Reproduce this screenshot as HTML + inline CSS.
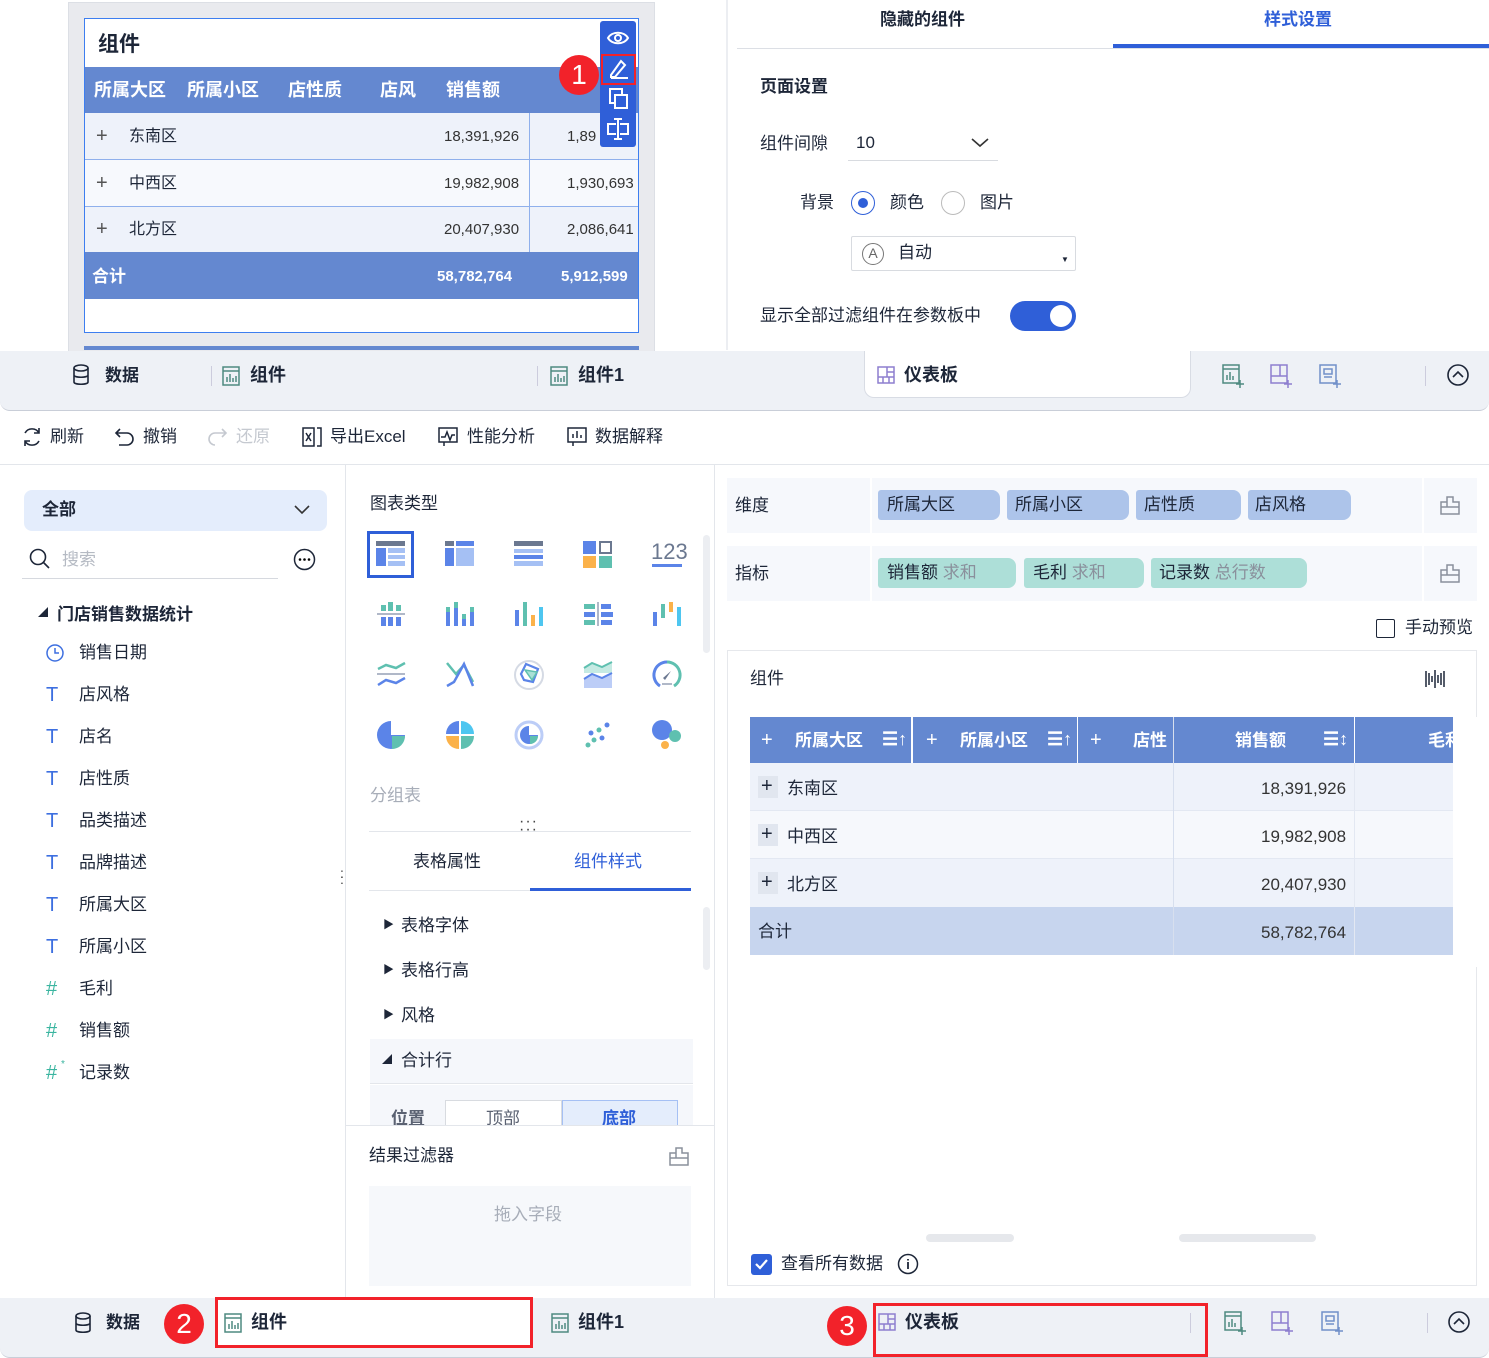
<!DOCTYPE html>
<html><head><meta charset="utf-8"><style>
*{box-sizing:border-box;margin:0;padding:0}
body{width:1489px;height:1358px;position:relative;overflow:hidden;background:#fff;font-family:"Liberation Sans","Noto Sans CJK SC",sans-serif;color:#1d2638;font-size:17px}
.a{position:absolute}
.t{position:absolute;white-space:nowrap;line-height:1}
.b{font-weight:bold}
.w{color:#fff}
svg{position:absolute;overflow:visible}
.tab{position:absolute;height:60px;background:#eef1f6;left:0;width:1489px;border-radius:0 0 10px 10px;border-bottom:1px solid #c9ced8}
.red{position:absolute;border:3px solid #f2222a}
.rc{position:absolute;width:40px;height:40px;border-radius:50%;background:#f2222a;color:#fff;font-size:28px;text-align:center;line-height:40px}
.gi{stroke:#4e8a80;fill:none;stroke-width:1.5}
</style></head><body>

<!-- ====== top left preview ====== -->
<div class="a" style="left:68px;top:2px;width:587px;height:350px;background:#e9eaee;border:1px solid #dcdfe5"></div>
<div class="a" style="left:84px;top:18px;width:555px;height:315px;background:#fff;border:1px solid #3d7ef0"></div>
<div class="t b" style="left:98px;top:34px;font-size:21px">组件</div>
<div class="a" style="left:85px;top:67px;width:553px;height:46px;background:#6488d0"></div>
<div class="t b w" style="left:94px;top:81px;font-size:18px">所属大区</div>
<div class="t b w" style="left:187px;top:81px;font-size:18px">所属小区</div>
<div class="t b w" style="left:288px;top:81px;font-size:18px">店性质</div>
<div class="t b w" style="left:380px;top:81px;font-size:18px">店风</div>
<div class="t b w" style="left:446px;top:81px;font-size:18px">销售额</div>
<div class="a" style="left:85px;top:113px;width:553px;height:47px;background:#eef2fa;border-bottom:1px solid #8fb0ec"></div>
<div class="a" style="left:85px;top:160px;width:553px;height:47px;background:#f7f9fd;border-bottom:1px solid #8fb0ec"></div>
<div class="a" style="left:85px;top:207px;width:553px;height:45px;background:#eef2fa"></div>
<div class="a" style="left:529px;top:113px;width:1px;height:139px;background:#8fb0ec"></div>
<div class="t" style="left:96px;top:126px;font-size:20px;color:#555">+</div>
<div class="t" style="left:129px;top:129px;font-size:16px">东南区</div>
<div class="t" style="left:444px;top:129px;font-size:15px;color:#333">18,391,926</div>
<div class="t" style="left:567px;top:129px;font-size:15px;color:#333">1,89</div>
<div class="t" style="left:96px;top:173px;font-size:20px;color:#555">+</div>
<div class="t" style="left:129px;top:176px;font-size:16px">中西区</div>
<div class="t" style="left:444px;top:176px;font-size:15px;color:#333">19,982,908</div>
<div class="t" style="left:567px;top:176px;font-size:15px;color:#333">1,930,693</div>
<div class="t" style="left:96px;top:219px;font-size:20px;color:#555">+</div>
<div class="t" style="left:129px;top:222px;font-size:16px">北方区</div>
<div class="t" style="left:444px;top:222px;font-size:15px;color:#333">20,407,930</div>
<div class="t" style="left:567px;top:222px;font-size:15px;color:#333">2,086,641</div>
<div class="a" style="left:85px;top:252px;width:553px;height:47px;background:#6488d0"></div>
<div class="t b w" style="left:92px;top:268px;font-size:17px">合计</div>
<div class="t b w" style="left:437px;top:269px;font-size:15px">58,782,764</div>
<div class="t b w" style="left:561px;top:269px;font-size:15px">5,912,599</div>
<div class="a" style="left:84px;top:346px;width:555px;height:4px;background:#6488d0"></div>
<!-- float toolbar -->
<div class="a" style="left:600px;top:21px;width:36px;height:126px;background:#2f5fd8;border-radius:3px"></div>
<svg style="left:607px;top:30px" width="22" height="16"><path d="M1 8C5 1 17 1 21 8C17 15 5 15 1 8Z" fill="none" stroke="#fff" stroke-width="2"/><circle cx="11" cy="8" r="3" fill="none" stroke="#fff" stroke-width="2"/></svg>
<div class="a" style="left:601px;top:54px;width:35px;height:31px;border:2px solid #f2222a"></div>
<svg style="left:608px;top:58px" width="22" height="22"><path d="M3 17L13 3L17 7L7 19H3Z M3 20H20" fill="none" stroke="#fff" stroke-width="2"/></svg>
<svg style="left:609px;top:88px" width="20" height="22"><rect x="1" y="1" width="12" height="14" fill="none" stroke="#fff" stroke-width="2"/><rect x="6" y="7" width="12" height="13" fill="#2f5fd8" stroke="#fff" stroke-width="2"/></svg>
<svg style="left:606px;top:117px" width="24" height="24"><path d="M12 2V22M8 2H16M8 22H16M10 7H2V17H10M14 7H22V17H14" fill="none" stroke="#fff" stroke-width="2"/></svg>
<div class="rc" style="left:559px;top:55px">1</div>

<!-- separator -->
<div class="a" style="left:726px;top:0;width:2px;height:350px;background:#eceef2"></div>

<!-- right settings -->
<div class="t b" style="left:880px;top:11px;font-size:17px">隐藏的组件</div>
<div class="t b" style="left:1264px;top:11px;font-size:17px;color:#2f5fd8">样式设置</div>
<div class="a" style="left:737px;top:48px;width:752px;height:1px;background:#dcdfe5"></div>
<div class="a" style="left:1113px;top:44px;width:376px;height:4px;background:#2f5fd8"></div>
<div class="t b" style="left:760px;top:78px;font-size:17px">页面设置</div>
<div class="t" style="left:760px;top:135px;font-size:17px">组件间隙</div>
<div class="t" style="left:856px;top:134px;font-size:17px">10</div>
<svg style="left:971px;top:138px" width="18" height="10"><path d="M1 1L9 8L17 1" fill="none" stroke="#333" stroke-width="1.6"/></svg>
<div class="a" style="left:848px;top:160px;width:150px;height:1px;background:#d8dbe0"></div>
<div class="t" style="left:800px;top:194px;font-size:17px">背景</div>
<div class="a" style="left:851px;top:191px;width:24px;height:24px;border-radius:50%;border:1.5px solid #2f5fd8"></div>
<div class="a" style="left:858px;top:198px;width:10px;height:10px;border-radius:50%;background:#2f5fd8"></div>
<div class="t" style="left:890px;top:194px;font-size:17px">颜色</div>
<div class="a" style="left:941px;top:191px;width:24px;height:24px;border-radius:50%;border:1.5px solid #bbb"></div>
<div class="t" style="left:980px;top:194px;font-size:17px">图片</div>
<div class="a" style="left:851px;top:236px;width:225px;height:35px;border:1px solid #d8dbe0;border-radius:2px"></div>
<div class="a" style="left:862px;top:243px;width:22px;height:22px;border-radius:50%;border:1.5px solid #777;font-size:14px;text-align:center;line-height:19px;color:#666">A</div>
<div class="t" style="left:898px;top:244px;font-size:17px">自动</div>
<div class="t" style="left:1061px;top:256px;font-size:8px">▼</div>
<div class="t" style="left:760px;top:307px;font-size:17px">显示全部过滤组件在参数板中</div>
<div class="a" style="left:1010px;top:301px;width:66px;height:30px;border-radius:15px;background:#2f5fd8"></div>
<div class="a" style="left:1050px;top:305px;width:22px;height:22px;border-radius:50%;background:#fff"></div>

<!-- top tab bar -->
<div class="tab" style="top:351px"></div>
<svg style="left:72px;top:364px" width="18" height="22"><ellipse cx="9" cy="4" rx="7" ry="3" fill="none" stroke="#1d2638" stroke-width="1.6"/><path d="M2 4V18C2 21 16 21 16 18V4M2 11C2 14 16 14 16 11" fill="none" stroke="#1d2638" stroke-width="1.6"/></svg>
<div class="t b" style="left:105px;top:367px">数据</div>
<div class="a" style="left:211px;top:366px;width:1px;height:20px;background:#ccd"></div>
<svg style="left:222px;top:366px" width="18" height="20"><rect x="1" y="1" width="16" height="18" class="gi"/><path d="M1 5H17M5 16V11M8 16V8M11 16V12M14 16V10" class="gi"/></svg>
<div class="t b" style="left:250px;top:366px;font-size:18px">组件</div>
<div class="a" style="left:537px;top:366px;width:1px;height:20px;background:#ccd"></div>
<svg style="left:550px;top:366px" width="18" height="20"><rect x="1" y="1" width="16" height="18" class="gi"/><path d="M1 5H17M5 16V11M8 16V8M11 16V12M14 16V10" class="gi"/></svg>
<div class="t b" style="left:578px;top:366px;font-size:18px">组件1</div>
<div class="a" style="left:864px;top:351px;width:327px;height:47px;background:#fff;border:1px solid #d8dce4;border-top:none;border-radius:0 0 10px 10px"></div>
<svg style="left:877px;top:366px" width="18" height="18"><rect x="1" y="1" width="16" height="16" fill="none" stroke="#8d7fcf" stroke-width="1.5"/><path d="M10 1V11M1 11H17M10 6H17M6 11V17M12 11V17" fill="none" stroke="#8d7fcf" stroke-width="1.5"/></svg>
<div class="t b" style="left:904px;top:366px;font-size:18px">仪表板</div>
<svg style="left:1222px;top:364px" width="24" height="24"><rect x="1" y="1" width="16" height="18" class="gi"/><path d="M1 5H17M5 16V11M8 16V8M11 16V12M18 16V24M14 20H22" class="gi"/></svg>
<svg style="left:1270px;top:364px" width="24" height="24"><rect x="1" y="1" width="16" height="18" fill="none" stroke="#8d7fcf" stroke-width="1.5"/><path d="M10 1V12M1 12H17M18 16V24M14 20H22" fill="none" stroke="#8d7fcf" stroke-width="1.5"/></svg>
<svg style="left:1319px;top:364px" width="24" height="24"><rect x="1" y="1" width="16" height="18" fill="none" stroke="#7190c9" stroke-width="1.5"/><path d="M5 5H13V10H5ZM5 13H13M18 16V24M14 20H22" fill="none" stroke="#7190c9" stroke-width="1.5"/></svg>
<div class="a" style="left:1425px;top:366px;width:1px;height:20px;background:#ccd"></div>
<svg style="left:1447px;top:364px" width="22" height="22"><circle cx="11" cy="11" r="10" fill="none" stroke="#1d2638" stroke-width="1.6"/><path d="M6 13L11 8L16 13" fill="none" stroke="#1d2638" stroke-width="1.6"/></svg>

<!-- toolbar -->
<svg style="left:21px;top:426px" width="22" height="22"><path d="M18 7A8 8 0 0 0 4 7M4 15A8 8 0 0 0 18 15M18 2V7H13M4 20V15H9" fill="none" stroke="#1d2638" stroke-width="1.6"/></svg>
<div class="t" style="left:50px;top:428px">刷新</div>
<svg style="left:115px;top:427px" width="20" height="20"><path d="M5 2L1 6L5 10M1 6H12A6 6 0 0 1 12 18H4" fill="none" stroke="#1d2638" stroke-width="1.6"/></svg>
<div class="t" style="left:143px;top:428px">撤销</div>
<svg style="left:207px;top:427px" width="20" height="20"><path d="M15 2L19 6L15 10M19 6H8A6 6 0 0 0 8 18" fill="none" stroke="#c5c9d0" stroke-width="1.6"/></svg>
<div class="t" style="left:236px;top:428px;color:#c5c9d0">还原</div>
<svg style="left:302px;top:427px" width="20" height="20"><path d="M1 1H12V19H1ZM15 1H19V19H15M4 6L9 14M9 6L4 14" fill="none" stroke="#1d2638" stroke-width="1.5"/></svg>
<div class="t" style="left:330px;top:428px">导出Excel</div>
<svg style="left:438px;top:427px" width="20" height="20"><path d="M1 1H19V15H1ZM3 10L7 10L9 5L12 13L14 8H17M6 15V19" fill="none" stroke="#1d2638" stroke-width="1.5"/></svg>
<div class="t" style="left:467px;top:428px">性能分析</div>
<svg style="left:567px;top:427px" width="20" height="20"><path d="M1 1H19V15H1ZM6 11V7M10 11V4M14 11V8M6 15V19" fill="none" stroke="#1d2638" stroke-width="1.5"/></svg>
<div class="t" style="left:595px;top:428px">数据解释</div>
<div class="a" style="left:0;top:464px;width:1489px;height:1px;background:#e3e6eb"></div>

<!-- left panel -->
<div class="a" style="left:24px;top:490px;width:303px;height:41px;background:#e4edfc;border-radius:8px"></div>
<div class="t b" style="left:42px;top:501px">全部</div>
<svg style="left:294px;top:505px" width="16" height="10"><path d="M1 1L8 8L15 1" fill="none" stroke="#333" stroke-width="1.6"/></svg>
<svg style="left:29px;top:548px" width="22" height="22"><circle cx="9" cy="9" r="7.5" fill="none" stroke="#1d2638" stroke-width="1.6"/><path d="M14 14L20 20" stroke="#1d2638" stroke-width="1.6"/></svg>
<div class="t" style="left:62px;top:551px;color:#b5bac3">搜索</div>
<div class="a" style="left:22px;top:578px;width:256px;height:1px;background:#d6d9df"></div>
<svg style="left:293px;top:548px" width="23" height="23"><circle cx="11.5" cy="11.5" r="10" fill="none" stroke="#1d2638" stroke-width="1.5"/><circle cx="7" cy="11.5" r="1.3"/><circle cx="11.5" cy="11.5" r="1.3"/><circle cx="16" cy="11.5" r="1.3"/></svg>
<div class="t" style="left:38px;top:609px;font-size:10px">◢</div>
<div class="t b" style="left:57px;top:606px">门店销售数据统计</div>
<svg style="left:46px;top:644px" width="18" height="18"><circle cx="9" cy="9" r="8" fill="none" stroke="#3d6fe0" stroke-width="1.5"/><path d="M9 4V9H13" fill="none" stroke="#3d6fe0" stroke-width="1.5"/></svg>
<div class="t" style="left:79px;top:644px">销售日期</div>
<div class="t" style="left:46px;top:685px;color:#3d6fe0;font-size:20px">T</div><div class="t" style="left:79px;top:686px">店风格</div>
<div class="t" style="left:46px;top:727px;color:#3d6fe0;font-size:20px">T</div><div class="t" style="left:79px;top:728px">店名</div>
<div class="t" style="left:46px;top:769px;color:#3d6fe0;font-size:20px">T</div><div class="t" style="left:79px;top:770px">店性质</div>
<div class="t" style="left:46px;top:811px;color:#3d6fe0;font-size:20px">T</div><div class="t" style="left:79px;top:812px">品类描述</div>
<div class="t" style="left:46px;top:853px;color:#3d6fe0;font-size:20px">T</div><div class="t" style="left:79px;top:854px">品牌描述</div>
<div class="t" style="left:46px;top:895px;color:#3d6fe0;font-size:20px">T</div><div class="t" style="left:79px;top:896px">所属大区</div>
<div class="t" style="left:46px;top:937px;color:#3d6fe0;font-size:20px">T</div><div class="t" style="left:79px;top:938px">所属小区</div>
<div class="t" style="left:46px;top:979px;color:#3bb5a0;font-size:20px">#</div><div class="t" style="left:79px;top:980px">毛利</div>
<div class="t" style="left:46px;top:1021px;color:#3bb5a0;font-size:20px">#</div><div class="t" style="left:79px;top:1022px">销售额</div>
<div class="t" style="left:46px;top:1063px;color:#3bb5a0;font-size:20px">#</div><div class="t" style="left:61px;top:1060px;color:#3bb5a0;font-size:10px">*</div><div class="t" style="left:79px;top:1064px">记录数</div>
<div class="t" style="left:340px;top:870px;font-size:14px;line-height:6px;color:#444">:<br>:</div>
<div class="a" style="left:345px;top:465px;width:1px;height:835px;background:#e3e6eb"></div>

<!-- middle panel -->
<div class="t" style="left:370px;top:495px">图表类型</div>
<div class="a" style="left:703px;top:535px;width:7px;height:118px;background:#eceef2;border-radius:4px"></div>
<div class="a" style="left:367px;top:531px;width:47px;height:47px;border:3px solid #2f5fd8"></div>
<svg style="left:376px;top:541px" width="30" height="30">
<rect x="0" y="0" width="29" height="5" fill="#6b7890"/><rect x="0" y="7" width="10" height="18" fill="#5b84e8"/><rect x="12" y="7" width="17" height="5" fill="#a5c0f4"/><rect x="12" y="14" width="17" height="4" fill="#a5c0f4"/><rect x="12" y="20" width="17" height="5" fill="#a5c0f4"/></svg>
<svg style="left:445px;top:541px" width="30" height="30"><rect x="0" y="0" width="9" height="5" fill="#6b7890"/><rect x="11" y="0" width="18" height="5" fill="#5b84e8"/><rect x="0" y="7" width="9" height="18" fill="#5b84e8"/><rect x="11" y="7" width="18" height="18" fill="#a5c0f4"/></svg>
<svg style="left:514px;top:541px" width="30" height="30"><rect x="0" y="0" width="29" height="5" fill="#6b7890"/><rect x="0" y="8" width="29" height="4" fill="#a5c0f4"/><rect x="0" y="14" width="29" height="4" fill="#5b84e8"/><rect x="0" y="20" width="29" height="5" fill="#a5c0f4"/></svg>
<svg style="left:583px;top:541px" width="30" height="30"><rect x="0" y="0" width="13" height="13" fill="#5b84e8"/><rect x="17" y="1" width="11" height="11" fill="none" stroke="#6b7890" stroke-width="2"/><rect x="0" y="15" width="13" height="12" fill="#fbb24a"/><rect x="16" y="15" width="13" height="12" fill="#5fc0b0"/></svg>
<div class="t" style="left:651px;top:541px;font-size:22px;color:#6b7890">123</div>
<div class="a" style="left:652px;top:564px;width:30px;height:3px;background:#5b84e8"></div>
<!-- row2 -->
<svg style="left:377px;top:602px" width="30" height="26"><rect x="4" y="3" width="5" height="6" fill="#5fc0b0"/><rect x="11" y="0" width="5" height="9" fill="#5fc0b0"/><rect x="19" y="3" width="5" height="6" fill="#5fc0b0"/><rect x="0" y="11" width="28" height="2" fill="#b0b8c8"/><rect x="4" y="15" width="5" height="9" fill="#5b84e8"/><rect x="11" y="15" width="5" height="9" fill="#5b84e8"/><rect x="19" y="15" width="5" height="9" fill="#5b84e8"/></svg>
<svg style="left:446px;top:602px" width="30" height="26"><rect x="0" y="5" width="4" height="19" fill="#5b84e8"/><rect x="0" y="5" width="4" height="5" fill="#5fc0b0"/><rect x="8" y="0" width="4" height="24" fill="#5b84e8"/><rect x="8" y="0" width="4" height="6" fill="#5fc0b0"/><rect x="16" y="12" width="4" height="12" fill="#5b84e8"/><rect x="16" y="12" width="4" height="5" fill="#5fc0b0"/><rect x="24" y="5" width="4" height="19" fill="#5b84e8"/><rect x="24" y="5" width="4" height="5" fill="#5fc0b0"/></svg>
<svg style="left:515px;top:602px" width="30" height="26"><rect x="0" y="8" width="4" height="16" fill="#5b84e8"/><rect x="8" y="0" width="4" height="24" fill="#5fc0b0"/><rect x="16" y="13" width="4" height="11" fill="#fbb24a"/><rect x="24" y="5" width="4" height="19" fill="#4ec6f0"/></svg>
<svg style="left:584px;top:602px" width="30" height="26"><rect x="0" y="2" width="11" height="5" fill="#5fc0b0"/><rect x="13" y="0" width="2" height="24" fill="#b0b8c8"/><rect x="17" y="2" width="10" height="5" fill="#5b84e8"/><rect x="0" y="10" width="11" height="5" fill="#5b84e8"/><rect x="17" y="10" width="12" height="5" fill="#5b84e8"/><rect x="0" y="18" width="11" height="5" fill="#5fc0b0"/><rect x="17" y="18" width="11" height="5" fill="#5b84e8"/></svg>
<svg style="left:653px;top:602px" width="30" height="26"><rect x="0" y="10" width="4" height="14" fill="#5b84e8"/><rect x="8" y="2" width="4" height="14" fill="#5fc0b0"/><rect x="16" y="0" width="4" height="10" fill="#fbb24a"/><rect x="24" y="5" width="4" height="19" fill="#4ec6f0"/></svg>
<!-- row3 -->
<svg style="left:377px;top:662px" width="30" height="26"><path d="M1 7L9 3L19 6L28 1" fill="none" stroke="#5fc0b0" stroke-width="2.5"/><rect x="0" y="11" width="28" height="2" fill="#b0b8c8"/><path d="M1 23L9 18L19 21L28 16" fill="none" stroke="#5b84e8" stroke-width="2.5"/></svg>
<svg style="left:446px;top:662px" width="30" height="26"><path d="M1 1L10 12L18 3L27 20" fill="none" stroke="#5fc0b0" stroke-width="2.5"/><path d="M1 24L8 20L18 2L27 24" fill="none" stroke="#5b84e8" stroke-width="2.5"/></svg>
<svg style="left:514px;top:660px" width="30" height="30"><circle cx="15" cy="15" r="14" fill="none" stroke="#d5dae4" stroke-width="2"/><path d="M7 14L12 4L24 9L19 22L10 20Z" fill="none" stroke="#5b84e8" stroke-width="2.2"/><path d="M11 10L23 12L18 20Z" fill="#a9e0d6" stroke="#5fc0b0" stroke-width="1.5"/></svg>
<svg style="left:584px;top:662px" width="30" height="26"><path d="M0 6L8 1L18 5L28 0V11H0Z" fill="#c5eae3"/><path d="M0 6L8 1L18 5L28 0" fill="none" stroke="#5fc0b0" stroke-width="2"/><path d="M0 17L8 12L18 16L28 11V26H0Z" fill="#bccdf7"/><path d="M0 17L8 12L18 16L28 11" fill="none" stroke="#5b84e8" stroke-width="2"/></svg>
<svg style="left:652px;top:660px" width="30" height="30"><path d="M8 26A13 13 0 0 1 15 2" fill="none" stroke="#5b84e8" stroke-width="3"/><path d="M15 2A13 13 0 0 1 22 26" fill="none" stroke="#5fc0b0" stroke-width="3"/><path d="M11 18L19 11L13 20Z" fill="#6b7890"/><rect x="10" y="23" width="10" height="2" fill="#b0b8c8"/></svg>
<!-- row4 -->
<svg style="left:376px;top:720px" width="30" height="30"><path d="M15 15V1A14 14 0 1 0 29 15Z" fill="#5b84e8"/><path d="M16 16H29A13 13 0 0 1 16 29Z" fill="#5fc0b0"/></svg>
<svg style="left:445px;top:720px" width="30" height="30"><path d="M14 14V1A13 13 0 0 0 1 14Z" fill="#5b84e8"/><path d="M16 14V1A13 13 0 0 1 29 14Z" fill="#4ec6f0"/><path d="M14 16H1A13 13 0 0 0 14 29Z" fill="#fbb24a"/><path d="M16 16H29A13 13 0 0 1 16 29Z" fill="#5fc0b0"/></svg>
<svg style="left:514px;top:720px" width="30" height="30"><circle cx="15" cy="15" r="13" fill="none" stroke="#bccdf7" stroke-width="3"/><path d="M15 15V6A9 9 0 1 0 24 15Z" fill="#5b84e8"/><path d="M16 16H24A8 8 0 0 1 16 24Z" fill="#5fc0b0"/></svg>
<svg style="left:583px;top:720px" width="30" height="30"><circle cx="5" cy="25" r="2.5" fill="#5fc0b0"/><circle cx="11" cy="20" r="2.5" fill="#5fc0b0"/><circle cx="8" cy="13" r="2.5" fill="#5b84e8"/><circle cx="16" cy="10" r="2.5" fill="#5fc0b0"/><circle cx="19" cy="18" r="2.5" fill="#5b84e8"/><circle cx="24" cy="5" r="2.5" fill="#5b84e8"/></svg>
<svg style="left:651px;top:719px" width="32" height="32"><circle cx="11" cy="11" r="10" fill="#5b84e8"/><circle cx="24" cy="17" r="6" fill="#5fc0b0"/><circle cx="14" cy="26" r="4" fill="#fbb24a"/></svg>
<div class="t" style="left:370px;top:787px;color:#a7adb8">分组表</div>
<div class="t" style="left:519px;top:818px;font-size:16px;letter-spacing:1px;line-height:8px;color:#444">···<br>···</div>
<div class="a" style="left:369px;top:831px;width:322px;height:1px;background:#e3e6eb"></div>
<div class="t" style="left:413px;top:853px">表格属性</div>
<div class="t" style="left:574px;top:853px;color:#2f5fd8">组件样式</div>
<div class="a" style="left:369px;top:890px;width:322px;height:1px;background:#e3e6eb"></div>
<div class="a" style="left:530px;top:888px;width:161px;height:3px;background:#2f5fd8"></div>
<div class="a" style="left:703px;top:907px;width:7px;height:63px;background:#eceef2;border-radius:4px"></div>
<div class="t" style="left:383px;top:920px;font-size:11px">▶</div><div class="t" style="left:401px;top:917px">表格字体</div>
<div class="t" style="left:383px;top:965px;font-size:11px">▶</div><div class="t" style="left:401px;top:962px">表格行高</div>
<div class="t" style="left:383px;top:1010px;font-size:11px">▶</div><div class="t" style="left:401px;top:1007px">风格</div>
<div class="a" style="left:370px;top:1039px;width:323px;height:45px;background:#f5f7fb;border-bottom:1px solid #e3e6eb"></div>
<div class="t" style="left:382px;top:1056px;font-size:10px">◢</div><div class="t" style="left:401px;top:1052px">合计行</div>
<div class="a" style="left:370px;top:1085px;width:323px;height:40px;background:#f5f7fb"></div>
<div class="t b" style="left:391px;top:1110px;color:#5b6272">位置</div>
<div class="a" style="left:445px;top:1100px;width:117px;height:30px;background:#fff;border:1px solid #d8dbe0"></div>
<div class="t" style="left:486px;top:1110px;color:#5b6272">顶部</div>
<div class="a" style="left:562px;top:1100px;width:116px;height:30px;background:#e4edfc;border:1px solid #a5c0f4"></div>
<div class="t b" style="left:602px;top:1110px;color:#2f5fd8">底部</div>
<div class="a" style="left:346px;top:1125px;width:368px;height:175px;background:#fff;border-top:1px solid #e3e6eb"></div>
<div class="t" style="left:369px;top:1147px">结果过滤器</div>
<svg style="left:669px;top:1147px" width="20" height="19"><path d="M7 1H13V6H19V18H1V6H7ZM1 11H19M7 6V11" fill="none" stroke="#8a909c" stroke-width="1.5"/></svg>
<div class="a" style="left:369px;top:1186px;width:322px;height:100px;background:#f6f8fb"></div>
<div class="t" style="left:494px;top:1206px;color:#a7adb8">拖入字段</div>
<div class="a" style="left:714px;top:465px;width:1px;height:835px;background:#e3e6eb"></div>

<!-- right panel -->
<div class="a" style="left:727px;top:478px;width:750px;height:55px;background:#f6f8fc"></div>
<div class="a" style="left:870px;top:478px;width:2px;height:55px;background:#fff"></div>
<div class="a" style="left:1422px;top:478px;width:2px;height:55px;background:#fff"></div>
<div class="t" style="left:735px;top:497px">维度</div>
<div class="a" style="left:878px;top:490px;width:122px;height:30px;background:#adc4ea;border-radius:3px 8px 8px 3px"></div><div class="t" style="left:887px;top:496px">所属大区</div>
<div class="a" style="left:1007px;top:490px;width:122px;height:30px;background:#adc4ea;border-radius:3px 8px 8px 3px"></div><div class="t" style="left:1015px;top:496px">所属小区</div>
<div class="a" style="left:1136px;top:490px;width:105px;height:30px;background:#adc4ea;border-radius:3px 8px 8px 3px"></div><div class="t" style="left:1144px;top:496px">店性质</div>
<div class="a" style="left:1248px;top:490px;width:103px;height:30px;background:#adc4ea;border-radius:3px 8px 8px 3px"></div><div class="t" style="left:1255px;top:496px">店风格</div>
<svg style="left:1440px;top:496px" width="20" height="19"><path d="M7 1H13V6H19V18H1V6H7ZM1 11H19M7 6V11" fill="none" stroke="#8a909c" stroke-width="1.5"/></svg>
<div class="a" style="left:727px;top:546px;width:750px;height:55px;background:#f6f8fc"></div>
<div class="a" style="left:870px;top:546px;width:2px;height:55px;background:#fff"></div>
<div class="a" style="left:1422px;top:546px;width:2px;height:55px;background:#fff"></div>
<div class="t" style="left:735px;top:565px">指标</div>
<div class="a" style="left:878px;top:558px;width:138px;height:30px;background:#addfd8;border-radius:3px 8px 8px 3px"></div><div class="t" style="left:887px;top:564px">销售额 <span style="color:#8a909c">求和</span></div>
<div class="a" style="left:1024px;top:558px;width:120px;height:30px;background:#addfd8;border-radius:3px 8px 8px 3px"></div><div class="t" style="left:1033px;top:564px">毛利 <span style="color:#8a909c">求和</span></div>
<div class="a" style="left:1151px;top:558px;width:156px;height:30px;background:#addfd8;border-radius:3px 8px 8px 3px"></div><div class="t" style="left:1159px;top:564px">记录数 <span style="color:#8a909c">总行数</span></div>
<svg style="left:1440px;top:564px" width="20" height="19"><path d="M7 1H13V6H19V18H1V6H7ZM1 11H19M7 6V11" fill="none" stroke="#8a909c" stroke-width="1.5"/></svg>
<div class="a" style="left:1376px;top:619px;width:19px;height:19px;border:1.5px solid #1d2638;border-radius:2px"></div>
<div class="t" style="left:1405px;top:619px">手动预览</div>

<div class="a" style="left:727px;top:650px;width:750px;height:636px;border:1px solid #e6e8ec"></div>
<div class="t" style="left:750px;top:670px">组件</div>
<svg style="left:1425px;top:669px" width="20" height="20"><path d="M1 2V18M4 4V16M7 7V13M10 1V19M13 6V14M16 4V16M19 2V18" stroke="#1d2638" stroke-width="1.5"/></svg>
<div class="a" style="left:750px;top:717px;width:703px;height:46px;background:#6488d0"></div>
<div class="a" style="left:911px;top:717px;width:2px;height:46px;background:#fff"></div>
<div class="a" style="left:1077px;top:717px;width:1px;height:46px;background:#fff"></div>
<div class="a" style="left:1354px;top:717px;width:1px;height:46px;background:#fff"></div>
<div class="t w" style="left:761px;top:730px;font-size:20px">+</div>
<div class="t b w" style="left:795px;top:732px">所属大区</div><div class="t b w" style="left:882px;top:730px;font-size:18px">☰↑</div>
<div class="t w" style="left:926px;top:730px;font-size:20px">+</div>
<div class="t b w" style="left:960px;top:732px">所属小区</div><div class="t b w" style="left:1047px;top:730px;font-size:18px">☰↑</div>
<div class="t w" style="left:1090px;top:730px;font-size:20px">+</div>
<div class="t b w" style="left:1133px;top:732px">店性</div>
<div class="t b w" style="left:1235px;top:732px">销售额</div><div class="t b w" style="left:1323px;top:730px;font-size:18px">☰↕</div>
<div class="t b w" style="left:1428px;top:732px">毛利</div>
<div class="a" style="left:1453px;top:717px;width:36px;height:250px;background:#fff"></div>
<div class="a" style="left:750px;top:763px;width:703px;height:48px;background:#eef2fa;border-bottom:1px solid #e3e8f2"></div>
<div class="a" style="left:750px;top:811px;width:703px;height:48px;background:#f6f8fc;border-bottom:1px solid #e3e8f2"></div>
<div class="a" style="left:750px;top:859px;width:703px;height:48px;background:#eef2fa"></div>
<div class="a" style="left:750px;top:907px;width:703px;height:48px;background:#c7d5ee"></div>
<div class="a" style="left:1173px;top:717px;width:1px;height:238px;background:#d7dfee"></div>
<div class="a" style="left:1354px;top:763px;width:1px;height:192px;background:#e3e8f2"></div>
<div class="a" style="left:758px;top:776px;width:20px;height:22px;background:#e1e6ef"></div><div class="t" style="left:761px;top:776px;font-size:20px">+</div><div class="t" style="left:787px;top:780px">东南区</div>
<div class="t" style="left:1261px;top:780px;color:#333">18,391,926</div>
<div class="a" style="left:758px;top:824px;width:20px;height:22px;background:#e1e6ef"></div><div class="t" style="left:761px;top:824px;font-size:20px">+</div><div class="t" style="left:787px;top:828px">中西区</div>
<div class="t" style="left:1261px;top:828px;color:#333">19,982,908</div>
<div class="a" style="left:758px;top:872px;width:20px;height:22px;background:#e1e6ef"></div><div class="t" style="left:761px;top:872px;font-size:20px">+</div><div class="t" style="left:787px;top:876px">北方区</div>
<div class="t" style="left:1261px;top:876px;color:#333">20,407,930</div>
<div class="t" style="left:758px;top:923px">合计</div>
<div class="t" style="left:1261px;top:924px;color:#333">58,782,764</div>
<div class="a" style="left:926px;top:1234px;width:88px;height:8px;background:#e6e8ec;border-radius:4px"></div>
<div class="a" style="left:1179px;top:1234px;width:137px;height:8px;background:#e6e8ec;border-radius:4px"></div>
<div class="a" style="left:751px;top:1254px;width:21px;height:21px;background:#2f5fd8;border-radius:3px"></div>
<svg style="left:754px;top:1258px" width="15" height="13"><path d="M2 6L6 10L13 2" fill="none" stroke="#fff" stroke-width="2.2"/></svg>
<div class="t" style="left:781px;top:1255px">查看所有数据</div>
<svg style="left:897px;top:1253px" width="22" height="22"><circle cx="11" cy="11" r="9.5" fill="none" stroke="#1d2638" stroke-width="1.5"/><path d="M11 9V16M11 6V7.5" stroke="#1d2638" stroke-width="1.8"/></svg>

<!-- bottom tab bar -->
<div class="tab" style="top:1298px"></div>
<svg style="left:74px;top:1312px" width="18" height="22"><ellipse cx="9" cy="4" rx="7" ry="3" fill="none" stroke="#1d2638" stroke-width="1.6"/><path d="M2 4V18C2 21 16 21 16 18V4M2 11C2 14 16 14 16 11" fill="none" stroke="#1d2638" stroke-width="1.6"/></svg>
<div class="t b" style="left:106px;top:1314px">数据</div>
<div class="a" style="left:215px;top:1297px;width:318px;height:51px;background:#fff;border:3px solid #f2222a"></div>
<svg style="left:224px;top:1313px" width="18" height="20"><rect x="1" y="1" width="16" height="18" class="gi"/><path d="M1 5H17M5 16V11M8 16V8M11 16V12M14 16V10" class="gi"/></svg>
<div class="t b" style="left:251px;top:1313px;font-size:18px">组件</div>
<div class="rc" style="left:164px;top:1304px">2</div>
<svg style="left:551px;top:1313px" width="18" height="20"><rect x="1" y="1" width="16" height="18" class="gi"/><path d="M1 5H17M5 16V11M8 16V8M11 16V12M14 16V10" class="gi"/></svg>
<div class="t b" style="left:578px;top:1313px;font-size:18px">组件1</div>
<div class="a" style="left:873px;top:1303px;width:335px;height:54px;border:3px solid #f2222a"></div>
<div class="a" style="left:1190px;top:1313px;width:1px;height:20px;background:#ccd"></div>
<svg style="left:878px;top:1313px" width="18" height="18"><rect x="1" y="1" width="16" height="16" fill="none" stroke="#8d7fcf" stroke-width="1.5"/><path d="M10 1V11M1 11H17M10 6H17M6 11V17M12 11V17" fill="none" stroke="#8d7fcf" stroke-width="1.5"/></svg>
<div class="t b" style="left:905px;top:1313px;font-size:18px">仪表板</div>
<div class="rc" style="left:827px;top:1306px">3</div>
<svg style="left:1224px;top:1311px" width="24" height="24"><rect x="1" y="1" width="16" height="18" class="gi"/><path d="M1 5H17M5 16V11M8 16V8M11 16V12M18 16V24M14 20H22" class="gi"/></svg>
<svg style="left:1271px;top:1311px" width="24" height="24"><rect x="1" y="1" width="16" height="18" fill="none" stroke="#8d7fcf" stroke-width="1.5"/><path d="M10 1V12M1 12H17M18 16V24M14 20H22" fill="none" stroke="#8d7fcf" stroke-width="1.5"/></svg>
<svg style="left:1321px;top:1311px" width="24" height="24"><rect x="1" y="1" width="16" height="18" fill="none" stroke="#7190c9" stroke-width="1.5"/><path d="M5 5H13V10H5ZM5 13H13M18 16V24M14 20H22" fill="none" stroke="#7190c9" stroke-width="1.5"/></svg>
<div class="a" style="left:1427px;top:1313px;width:1px;height:20px;background:#ccd"></div>
<svg style="left:1448px;top:1311px" width="22" height="22"><circle cx="11" cy="11" r="10" fill="none" stroke="#1d2638" stroke-width="1.6"/><path d="M6 13L11 8L16 13" fill="none" stroke="#1d2638" stroke-width="1.6"/></svg>
</body></html>
